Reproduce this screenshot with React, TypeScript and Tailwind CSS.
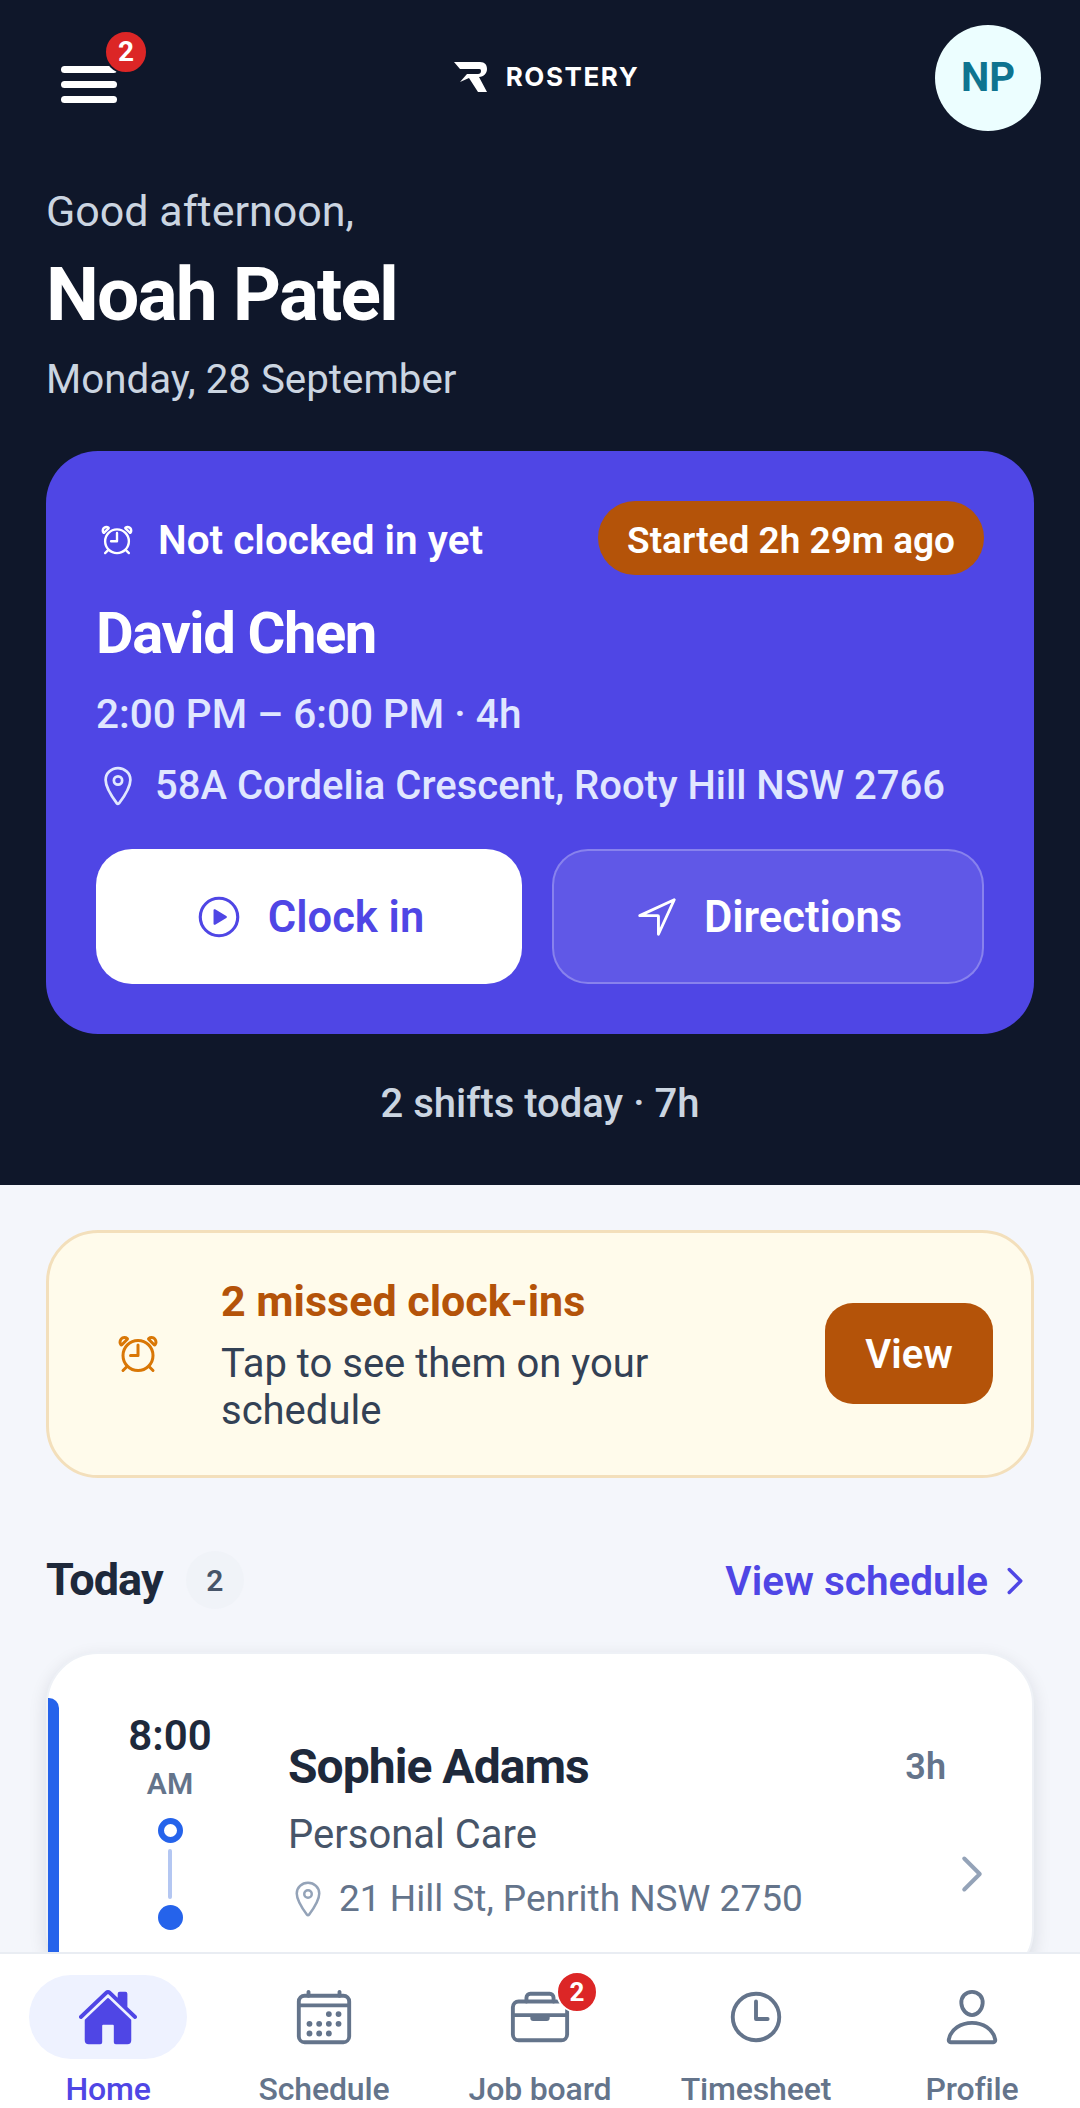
import React from "react";
import {
  IoAlarmOutline,
  IoLocationOutline,
  IoPlayCircleOutline,
  IoNavigateOutline,
  IoHome,
  IoCalendarOutline,
  IoBriefcaseOutline,
  IoTimeOutline,
  IoPersonOutline,
} from "react-icons/io5";
import { ChevronRight } from "lucide-react";

function NavItem({ icon, label, active, badge }: { icon: React.ReactNode; label: string; active?: boolean; badge?: boolean }) {
  return (
    <div className="flex flex-col items-center">
      <div className={`relative flex h-[84px] w-[158px] items-center justify-center rounded-[42px] ${active ? "bg-[#eef2ff]" : ""}`}>
        {icon}
        {badge && (
          <span className="absolute left-[95px] top-[-4px] flex h-[42px] w-[42px] items-center justify-center rounded-full border-[2px] border-white bg-[#dc2626] text-[26px] font-bold text-white">
            2
          </span>
        )}
      </div>
      <span className={`mt-[12px] text-[32px] leading-[36px] font-medium tracking-[-0.005em] whitespace-nowrap ${active ? "text-[#4f46e5]" : "text-[#64748b]"}`}>{label}</span>
    </div>
  );
}

export default function App() {
  return (
    <div className="flex h-[2108px] w-[1080px] flex-col overflow-hidden bg-[#f4f6fb] font-['Roboto',sans-serif]">
      <div className="flex min-h-0 flex-1 flex-col overflow-hidden">
        <header className="h-[1185px] shrink-0 bg-[#0f172a] px-[46px]">
          <div className="flex h-[131px] items-end justify-between">
            <div className="relative mb-[28px] ml-[15px] flex w-[56px] flex-col gap-[8px]">
              <span className="h-[7px] rounded-full bg-white" />
              <span className="h-[7px] rounded-full bg-white" />
              <span className="h-[7px] rounded-full bg-white" />
              <span className="absolute left-[43px] top-[-36px] flex h-[44px] w-[44px] items-center justify-center rounded-full border-[2px] border-[#0f172a] bg-[#dc2626] text-[28px] font-bold text-white">
                2
              </span>
            </div>
            <div className="mb-[39px] ml-[40px] flex items-center gap-[19px]">
              <svg width="34" height="30" viewBox="0 0 34 30" fill="#ffffff">
                <path d="M1 0h26c5 0 7 3 7 7s-3 8-8 8l8 15h-9l-9-14-9 4 7-8h11c2 0 3-1 3-3s-1-2-3-2H7z" />
              </svg>
              <span className="font-['Inter',sans-serif] text-[26px] leading-[26px] font-bold tracking-[0.06em] text-white">ROSTERY</span>
            </div>
            <div className="mr-[-7px] flex h-[106px] w-[106px] items-center justify-center rounded-full bg-[#ecfeff] text-[40px] font-bold text-[#0e7490]">
              NP
            </div>
          </div>

          <p className="mt-[56px] text-[43px] leading-[48px] text-[#cbd5e1]">Good afternoon,</p>
          <h1 className="mt-[17px] text-[75px] leading-[84px] font-bold tracking-[-0.025em] text-white">Noah Patel</h1>
          <p className="mt-[20px] text-[40.3px] leading-[48px] text-[#cbd5e1]">Monday, 28 September</p>

          <section className="mt-[47px] h-[583px] rounded-[52px] bg-[#4f46e5] px-[50px] pt-[53px]">
            <div className="flex items-center justify-between">
              <div className="flex -translate-y-[1px] items-center gap-[22px]">
                <IoAlarmOutline className="ml-[2px] text-[38px] text-white" />
                <span className="text-[40.5px] leading-[46px] font-semibold text-white">Not clocked in yet</span>
              </div>
              <span className="flex h-[74px] -translate-y-[3px] items-center rounded-full bg-[#b45309] px-[29px] pt-[5px] text-[37px] font-semibold text-white">Started 2h 29m ago</span>
            </div>
            <h2 className="mt-[22px] text-[58px] leading-[66px] font-bold tracking-[-0.025em] text-white">David Chen</h2>
            <p className="mt-[26px] text-[40.5px] leading-[44px] font-medium text-[#e0e7ff]">2:00 PM – 6:00 PM · 4h</p>
            <div className="mt-[27px] flex items-center gap-[15px]">
              <IoLocationOutline className="text-[44px] text-[#e0e7ff]" />
              <span className="text-[40px] leading-[46px] font-medium whitespace-nowrap text-[#e0e7ff]">58A Cordelia Crescent, Rooty Hill NSW 2766</span>
            </div>
            <div className="mt-[40px] flex gap-[30px]">
              <div className="flex h-[135px] w-[426px] items-center justify-center gap-[24px] rounded-[36px] bg-white">
                <IoPlayCircleOutline className="text-[50px] text-[#4f46e5]" />
                <span className="pt-[2px] text-[43.5px] font-semibold text-[#4f46e5]">Clock in</span>
              </div>
              <div className="flex h-[135px] w-[432px] items-center justify-center gap-[24px] rounded-[36px] border-2 border-white/25 bg-white/10">
                <IoNavigateOutline className="text-[46px] text-white" />
                <span className="pt-[2px] text-[43.5px] font-semibold text-white">Directions</span>
              </div>
            </div>
          </section>

          <p className="mt-[48px] text-center text-[40px] leading-[44px] font-medium text-[#cbd5e1]">2 shifts today · 7h</p>
        </header>

        <main className="px-[46px]">
          <section className="mt-[45px] flex h-[248px] items-center rounded-[52px] border-[3px] border-[#f3dfbb] bg-[#fffbeb] pl-[65px] pr-[38px]">
            <IoAlarmOutline className="shrink-0 text-[48px] text-[#d97706]" />
            <div className="ml-[59px] w-[480px] shrink-0 pt-[3px]">
              <p className="text-[43px] leading-[46px] font-bold text-[#b45309]">2 missed clock-ins</p>
              <p className="mt-[16px] text-[40px] leading-[47px] text-[#334155]">Tap to see them on your schedule</p>
            </div>
            <div className="mb-[2px] ml-auto flex h-[101px] w-[168px] items-center justify-center rounded-[28px] bg-[#b45309] pt-[4px] text-[40px] font-semibold text-white">View</div>
          </section>

          <div className="mt-[71px] flex items-center justify-between">
            <div className="flex items-center gap-[23px]">
              <span className="text-[45px] leading-[56px] font-bold tracking-[-0.02em] text-[#1e293b]">Today</span>
              <span className="flex h-[58px] w-[58px] items-center justify-center rounded-full bg-[#f0f3f8] text-[30px] font-semibold text-[#475569]">2</span>
            </div>
            <div className="mr-[-4px] flex items-center gap-[4px] pt-[2px] text-[#4f46e5]">
              <span className="text-[40.5px] font-semibold">View schedule</span>
              <ChevronRight size={46} strokeWidth={1.8} />
            </div>
          </div>

          <section className="relative mt-[40px] flex h-[330px] rounded-[52px] border-2 border-[#eef1f6] bg-white shadow-[0_6px_18px_rgba(15,23,42,0.12)]">
            <span className="absolute left-[0px] top-[44px] h-[270px] w-[11px] rounded-tr-[10px] bg-[#2563eb]" />
            <div className="ml-[68px] flex w-[108px] flex-col items-center pt-[57px]">
              <span className="text-[42px] leading-[50px] font-semibold text-[#1e293b]">8:00</span>
              <span className="mt-[6px] text-[30px] leading-[34px] font-semibold text-[#64748b]">AM</span>
              <span className="mt-[17px] h-[25px] w-[25px] rounded-full border-[6px] border-[#2563eb]" />
              <span className="my-[6px] h-[50px] w-[4px] rounded-full bg-[#b4c7f2]" />
              <span className="h-[25px] w-[25px] rounded-full bg-[#2563eb]" />
            </div>
            <div className="ml-[64px] flex-1 pt-[85px] pr-[40px]">
              <div className="flex items-center justify-between pr-[46px]">
                <span className="text-[48px] leading-[56px] font-bold tracking-[-0.02em] text-[#1e293b]">Sophie Adams</span>
                <span className="text-[36px] font-semibold text-[#64748b]">3h</span>
              </div>
              <p className="mt-[17px] text-[40px] leading-[46px] text-[#475569]">Personal Care</p>
              <div className="relative mt-[18px] flex items-center gap-[11px]">
                <IoLocationOutline className="text-[40px] text-[#94a3b8]" />
                <span className="text-[37px] leading-[46px] text-[#64748b]">21 Hill St, Penrith NSW 2750</span>
                <ChevronRight size={62} strokeWidth={1.55} className="absolute right-[-11px] top-[-33px] text-[#94a3b8]" />
              </div>
            </div>
          </section>
        </main>
      </div>

      <nav className="grid h-[156px] shrink-0 grid-cols-5 justify-items-center border-t-2 border-[#e9edf3] bg-white pt-[21px]">
        <NavItem active label="Home" icon={<IoHome className="text-[62px] text-[#4f46e5]" />} />
        <NavItem label="Schedule" icon={<IoCalendarOutline className="text-[62px] text-[#64748b]" />} />
        <NavItem badge label="Job board" icon={<IoBriefcaseOutline className="text-[62px] text-[#64748b]" />} />
        <NavItem label="Timesheet" icon={<IoTimeOutline className="text-[62px] text-[#64748b]" />} />
        <NavItem label="Profile" icon={<IoPersonOutline className="text-[62px] text-[#64748b]" />} />
      </nav>
    </div>
  );
}
